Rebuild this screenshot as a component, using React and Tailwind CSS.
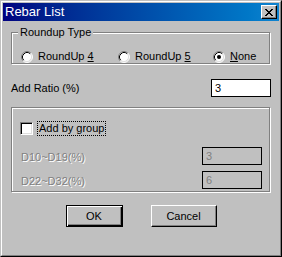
import React from 'react';

const Radio = ({ checked }) => (
    <svg width="12" height="12" viewBox="0 0 12 12" className="shrink-0">
        <circle cx="6" cy="6" r="5" fill="#fff" />
        <path d="M2.11 9.89 A5.5 5.5 0 0 1 9.89 2.11" stroke="#808080" fill="none" />
        <path d="M9.89 2.11 A5.5 5.5 0 0 1 2.11 9.89" stroke="#fff" fill="none" />
        <path d="M2.82 9.18 A4.5 4.5 0 0 1 9.18 2.82" stroke="#000" fill="none" />
        <path d="M9.18 2.82 A4.5 4.5 0 0 1 2.82 9.18" stroke="#dfdfdf" fill="none" />
        {checked && <circle cx="6" cy="6" r="2" fill="#000" />}
    </svg>
);

const CloseIcon = () => (
    <svg width="8" height="7" viewBox="0 0 8 7" shapeRendering="crispEdges">
        <path
            d="M0 0h2v1H0zM6 0h2v1H6zM1 1h2v1H1zM5 1h2v1H5zM2 2h4v1H2zM3 3h2v1H3zM2 4h4v1H2zM1 5h2v1H1zM5 5h2v1H5zM0 6h2v1H0zM6 6h2v1H6z"
            fill="#000"
        />
    </svg>
);

const etched = 'border border-[#808080] shadow-[1px_1px_0_#fff,inset_1px_1px_0_#fff]';

const App = () => {
    return (
        <div className="w-[282px] h-[257px] bg-[#c0c0c0] border border-t-[#c0c0c0] border-l-[#c0c0c0] border-r-black border-b-black font-['Liberation_Sans',Arial,sans-serif] text-[11px] text-black select-none">
            <div className="h-full border border-t-white border-l-white border-r-[#808080] border-b-[#808080] p-px flex flex-col">
                {/* Title bar */}
                <div className="h-[18px] flex items-center justify-between pl-[2px] pr-[2px] bg-linear-to-r from-[#000080] to-[#1084d0]">
                    <span className="text-white text-[13px] leading-[18px]">Rebar List</span>
                    <div className="w-[16px] h-[14px] flex items-center justify-center bg-[#c0c0c0] border border-t-white border-l-white border-r-black border-b-black shadow-[inset_-1px_-1px_0_#808080]">
                        <CloseIcon />
                    </div>
                </div>

                {/* Body */}
                <div className="flex-1 flex flex-col pl-[8px] pr-[9px]">
                    <fieldset className={`mt-[4px] px-[6px] ${etched}`}>
                        <legend className="px-[2px] leading-[14px] bg-[#c0c0c0]">Roundup Type</legend>
                        <div className="flex items-center h-[13px] mt-[11px] ml-[3px]">
                            <div className="w-[97px] flex items-center gap-[5px]">
                                <Radio />
                                <span className="leading-[13px]">RoundUp <u>4</u></span>
                            </div>
                            <div className="w-[95px] flex items-center gap-[5px]">
                                <Radio />
                                <span className="leading-[13px]">RoundUp <u>5</u></span>
                            </div>
                            <div className="flex items-center gap-[5px]">
                                <Radio checked />
                                <span className="leading-[13px]"><u>N</u>one</span>
                            </div>
                        </div>
                    </fieldset>

                    <div className="flex items-center justify-between mt-[15px] mr-[-1px]">
                        <span>Add Ratio (%)</span>
                        <input
                            readOnly
                            value="3"
                            className="w-[60px] h-[18px] px-[3px] bg-white border border-black outline-none text-[11px]"
                        />
                    </div>

                    <fieldset className={`mt-[10px] pl-[8px] pr-[7px] pt-[13px] pb-[2px] ${etched}`}>
                        <div className="flex items-center h-[15px] gap-[4px]">
                            <span className="w-[13px] h-[13px] bg-white border border-t-[#808080] border-l-[#808080] border-r-white border-b-white shadow-[inset_1px_1px_0_#000,inset_-1px_-1px_0_#dfdfdf]"></span>
                            <span className="h-[15px] px-px leading-[13px] border border-dotted border-black">Add by group</span>
                        </div>
                        <div className="flex flex-col gap-[6px] mt-[11px] ml-[1px]">
                            <div className="flex items-center justify-between h-[18px]">
                                <span className="text-[#808080] [text-shadow:1px_1px_0_#fff] mt-[2px]">D10~D19(%)</span>
                                <input
                                    readOnly
                                    disabled
                                    value="3"
                                    className="w-[60px] h-[18px] px-[3px] bg-[#c0c0c0] border border-black text-[#808080] outline-none text-[11px]"
                                />
                            </div>
                            <div className="flex items-center justify-between h-[18px]">
                                <span className="text-[#808080] [text-shadow:1px_1px_0_#fff] mt-[2px]">D22~D32(%)</span>
                                <input
                                    readOnly
                                    disabled
                                    value="6"
                                    className="w-[60px] h-[18px] px-[3px] bg-[#c0c0c0] border border-black text-[#808080] outline-none text-[11px]"
                                />
                            </div>
                        </div>
                    </fieldset>

                    <div className="flex justify-center gap-[28px] mt-[13px] pl-[1px]">
                        <button className="w-[57px] h-[22px] bg-[#c0c0c0] border border-black shadow-[inset_1px_1px_0_#fff,inset_-1px_-1px_0_#000,inset_-2px_-2px_0_#808080] text-[11px]">
                            OK
                        </button>
                        <button className="w-[66px] h-[22px] bg-[#c0c0c0] border border-t-white border-l-white border-r-black border-b-black shadow-[inset_-1px_-1px_0_#808080] text-[11px]">
                            Cancel
                        </button>
                    </div>
                </div>
            </div>
        </div>
    );
};

export default App;
